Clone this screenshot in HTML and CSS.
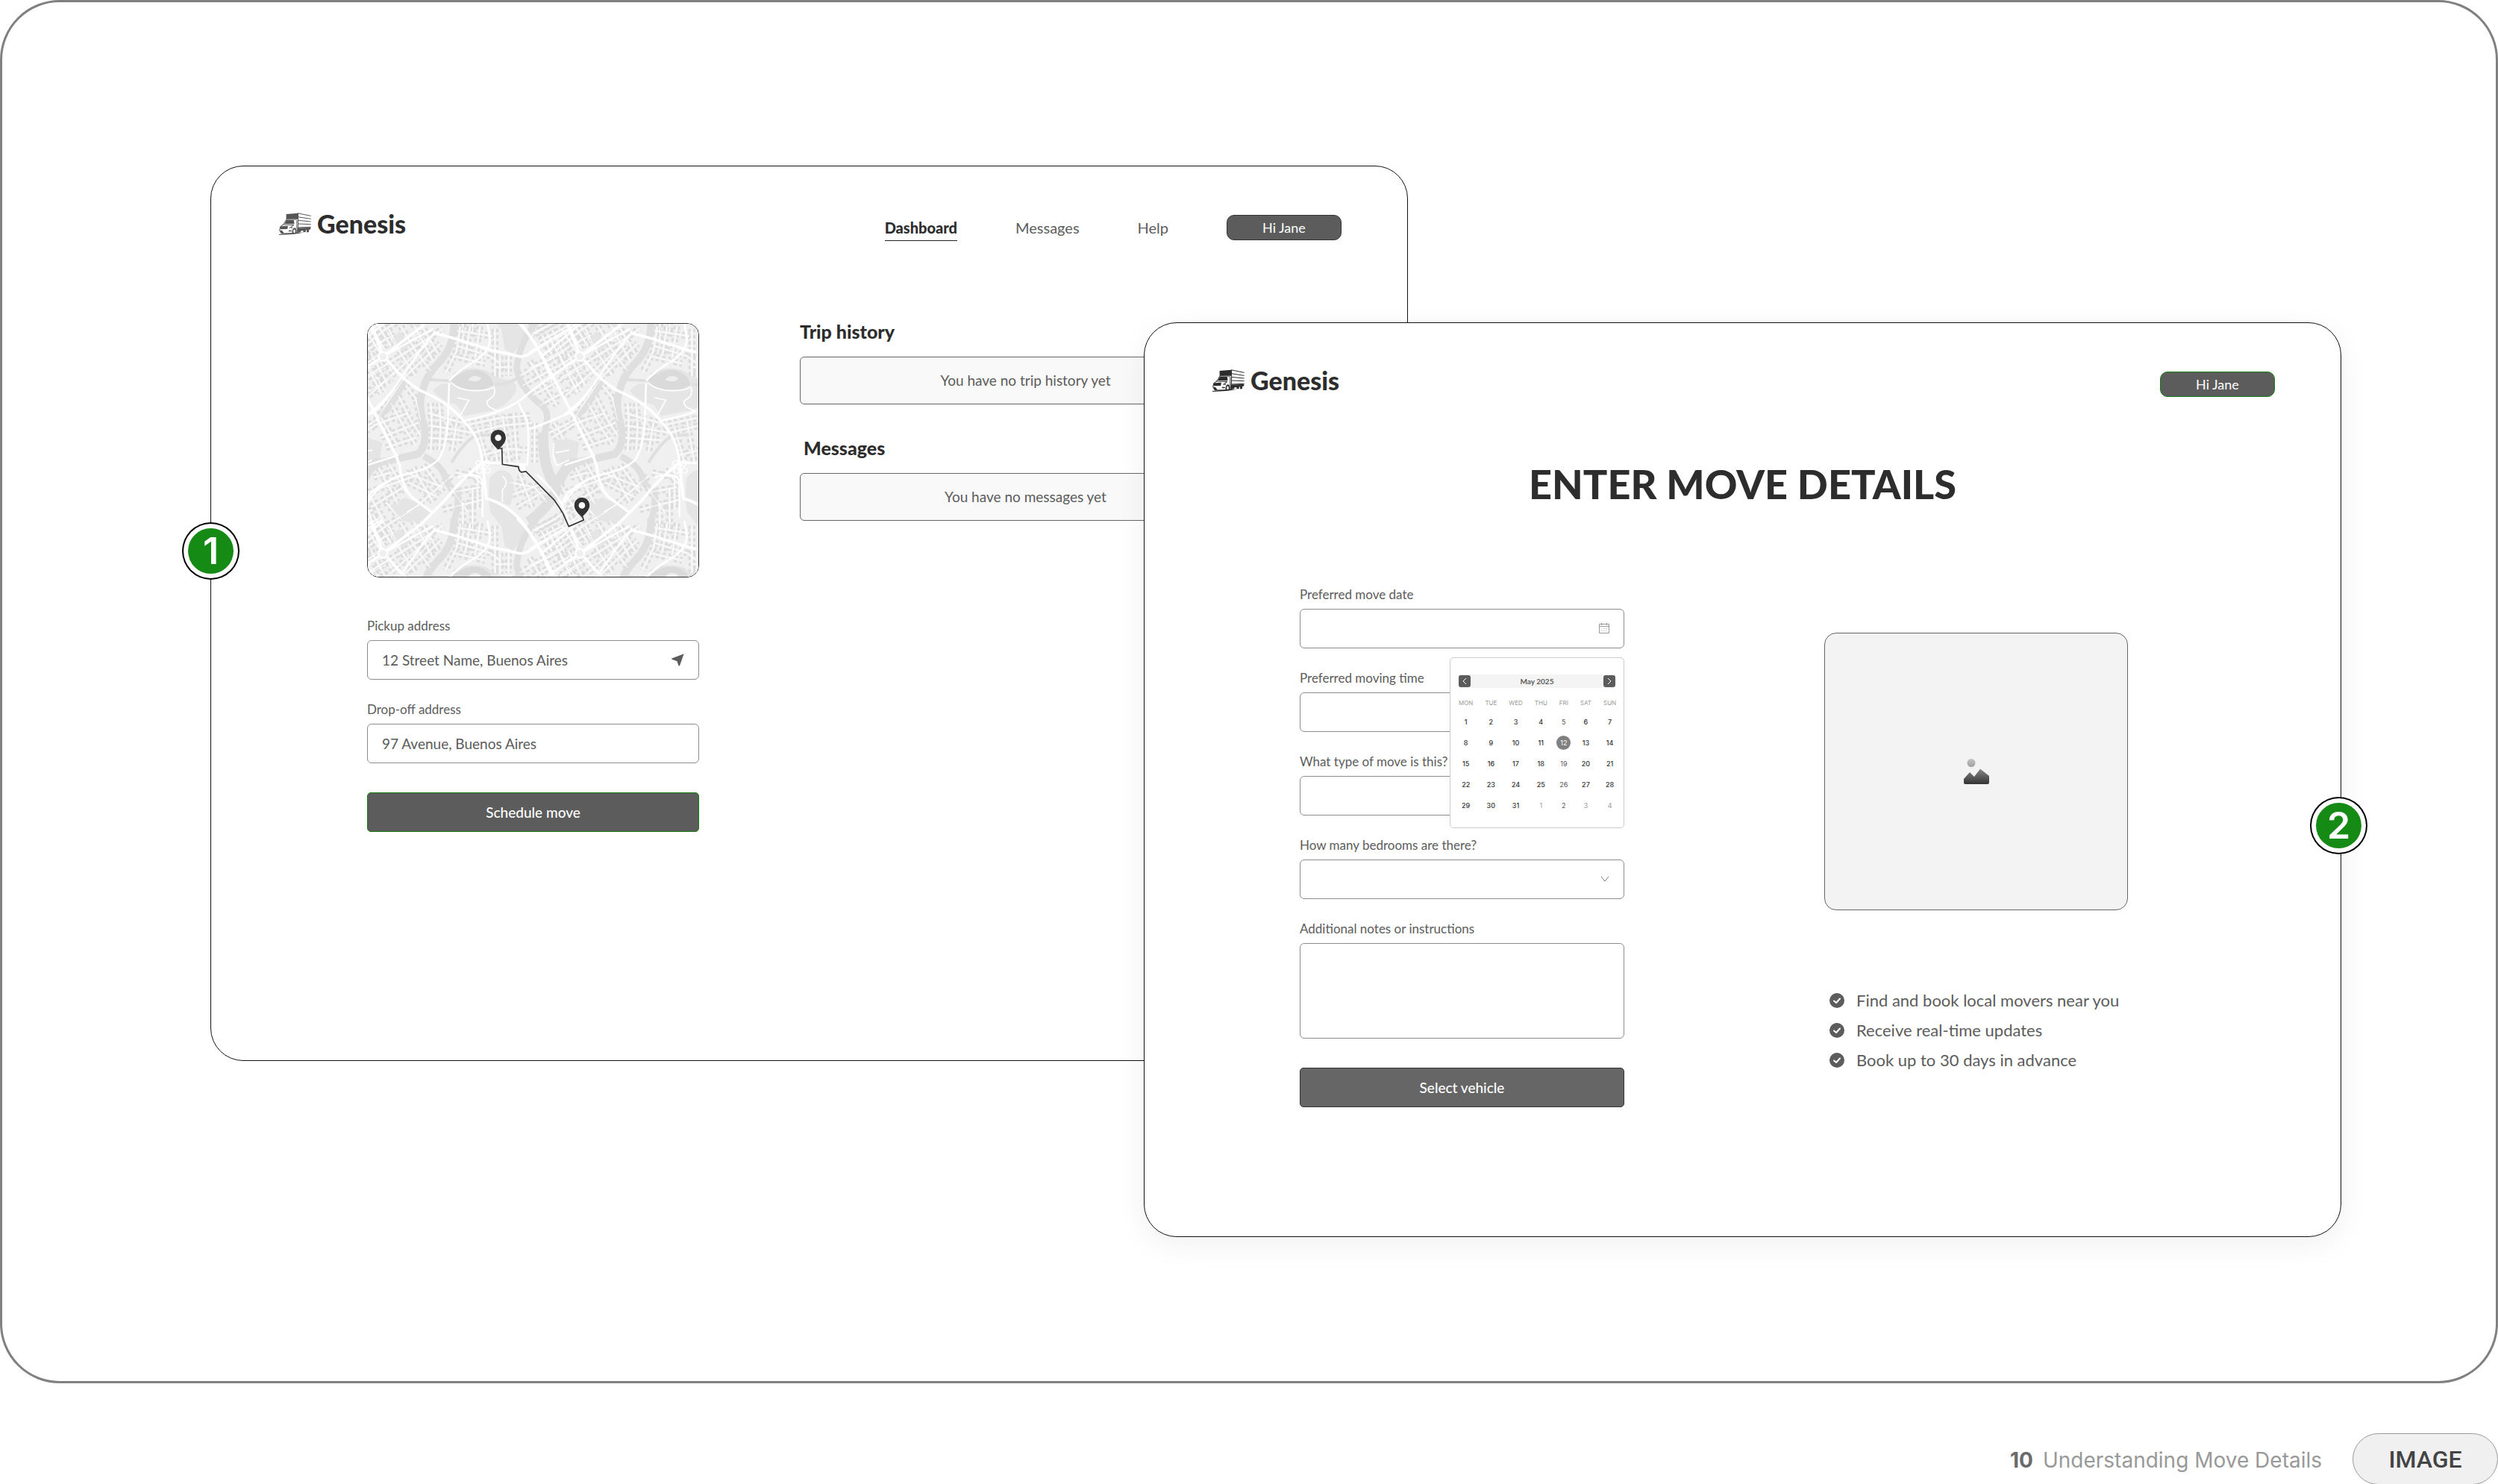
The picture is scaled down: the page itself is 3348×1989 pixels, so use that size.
FILE: index.html
```html
<!DOCTYPE html>
<html lang="en">
<head>
    <meta charset="UTF-8">
    <meta name="viewport" content="width=device-width, initial-scale=1.0">
    <title>Understanding Move Details</title>
    <link rel="stylesheet" href="styles.css">
</head>
<body>
    <!-- Shared symbols -->
    <svg class="symbols" aria-hidden="true">
        <symbol id="truck" viewBox="0 0 130 90">
            <path fill="currentColor" d="M29 6L77 2V27L66 25L32 26L29 28Z"/>
            <path fill="none" stroke="currentColor" stroke-width="3" d="M77 2V62M76 2L129 13M77 17L129 25M77 31L129 36M77 45L129 47M77 60L129 58"/>
            <path fill="none" stroke="currentColor" stroke-width="3" d="M30 27L18 47L5 56L2 72L10 84H56M30 27H68L72 32V64M16 48L60 50L42 62"/>
            <path fill="currentColor" d="M30 30H60L62 46L22 45Z"/>
            <path fill="currentColor" d="M7 55L36 53L34 66L4 67ZM4 71L12 72L20 82L14 85L7 82ZM46 62L54 56L53 64ZM40 71L52 72L50 76L38 76Z"/>
            <path fill="currentColor" d="M53 84Q52 62 63 61Q73 62 72 82L66 85Z"/>
            <ellipse cx="62" cy="75" rx="4" ry="7" fill="#fff"/>
            <path fill="currentColor" d="M73 62L128 60V67L121 69V78L112 80V70L108 71V78L98 79V72L88 74V78L73 82Z"/>
            <path fill="currentColor" d="M0 87Q40 83 100 80Q60 90 0 90Z"/>
        </symbol>
        <symbol id="check" viewBox="0 0 20 20">
            <circle cx="10" cy="10" r="10" fill="#5c5c5c"/>
            <path fill="none" stroke="#fff" stroke-width="2" stroke-linecap="round" stroke-linejoin="round" d="M6 10.500L9 13L14 7.500"/>
        </symbol>
        <symbol id="pin" viewBox="0 0 62 80">
            <path fill="#333" d="M31 0A31 31 0 0 1 62 31C62 52 44 66 31 80C18 66 0 52 0 31A31 31 0 0 1 31 0Z"/>
            <circle cx="31" cy="32" r="13" fill="#fff"/>
        </symbol>
    </svg>

    <main class="board">
        <section class="screen dashboard">
            <span class="badge">1</span>
            <header class="topbar">
                <a class="logo muted" href="#"><svg><use href="#truck"/></svg>Genesis</a>
                <nav>
                    <a class="active" href="#">Dashboard</a>
                    <a href="#">Messages</a>
                    <a href="#">Help</a>
                    <button class="user" type="button">Hi Jane</button>
                </nav>
            </header>

            <div class="columns">
                <form>
                    <svg class="map" viewBox="36 40 1336 1021" preserveAspectRatio="xMidYMid slice" role="img" aria-label="Route map">
                        <defs>
                            <!-- the city repeats every 795 units both ways -->
                            <path id="streets" d="
                                M0 150L110 60L210 0 M20 260L200 150L340 60 M40 330L130 250L290 110 M70 430L190 250L330 120
                                M120 60L170 160L230 250 M170 50L230 150L290 230 M60 20L130 130 M220 40L300 190 M20 180L90 320 M50 160L120 290 M250 40L320 160
                                M410 50L395 150L350 240 M450 50L430 170 M490 50L470 180 M400 130L530 170L570 200 M380 170L510 200 M410 70L540 90
                                M550 60V250 M570 170V255 M605 170V250 M550 215H605
                                M650 250L830 150 M660 290L860 180 M700 330L900 220 M730 370L930 260 M690 190L800 370 M780 120L900 310 M730 110L880 30 M700 80L800 30 M820 60L940 250 M760 80L830 200 M690 220L780 180
                                M190 290L230 340L250 430 M160 330L210 430L250 490 M130 360L190 470L230 530 M90 420L150 520 M60 450L200 400 M90 500L240 440 M110 540L230 500
                                M290 360Q300 450 290 560 M325 360Q335 450 325 550 M280 400L420 440 M285 450L460 480 M280 500L430 510 M395 440L375 560
                                M430 450L570 420L690 410 M460 480L580 450L700 440 M500 570L600 545L680 550 M530 430L560 600 M580 410L610 600 M625 400L640 600 M480 460L520 600 M710 440V600
                                M790 440L830 510 M780 500L860 450 M770 480L870 430
                                M60 660L130 640 M80 620L160 770 M120 600L190 720 M40 720L240 650 M50 780L180 700 M110 760L170 830 M20 690L100 830
                                M190 640L340 700 M200 680L320 740 M220 620L300 760 M260 610L340 720 M230 780L380 650
                                M390 640L480 660V790 M440 630L500 690 M380 720L490 700 M340 790L500 750 M420 760V900 M370 700L440 800 M460 700V870
                                M610 680L710 700L760 760 M620 730L730 690 M640 780L740 720 M650 650L700 780
                                M690 890L850 790 M720 940L890 840 M750 980L940 880 M780 860L830 960 M740 880L800 1000 M830 820L900 940 M870 800L940 920"/>
                            <g id="blocks" fill="none">
                                <use href="#streets" stroke="#dcdcdc" stroke-width="28" stroke-dasharray="14 11"/>
                                <use href="#streets" stroke="#f0f0f0" stroke-width="10"/>
                            </g>
                            <g id="land">
                                <path fill="#e5e5e5" d="M300 310Q330 270 375 285L380 240Q440 205 520 230Q550 262 600 265Q645 275 635 315Q600 370 545 390L425 412L395 365Q340 360 300 310ZM525 745Q620 790 685 870Q650 920 625 955L590 940L577 860L530 800ZM527 665Q570 605 615 650Q640 710 610 775L525 740ZM785 510Q840 495 890 520L880 590L810 612L785 560ZM130 770L190 740L305 800L240 848L165 832ZM130 110L165 70L210 120L180 150Z"/>
                                <path fill="none" stroke="#dfdfdf" stroke-width="30" d="M385 30Q385 130 330 190Q270 250 258 310Q240 360 258 430Q285 520 240 565Q180 580 36 610"/>
                                <path fill="none" stroke="#dfdfdf" stroke-width="26" d="M262 575Q335 610 350 660Q360 700 400 720Q405 780 385 835M185 270Q150 340 110 390L85 410M720 30Q645 120 638 220Q650 300 740 370Q775 400 752 470Q735 600 800 680"/>
                                <path fill="none" stroke="#dfdfdf" stroke-width="42" d="M90 605Q60 590 20 660Q0 760 -110 840M745 480Q740 610 790 690"/>
                                <path fill="none" stroke="#dfdfdf" stroke-width="12" d="M280 265L370 270M550 285Q600 285 640 260M375 600Q430 510 475 490L545 488"/>
                                <path fill="#dadada" d="M370 270Q430 215 490 228Q535 245 545 285Q500 315 470 305Q420 318 370 270Z"/>
                                <path fill="#eee" d="M442 266Q465 238 495 260Q480 282 442 266Z"/>
                            </g>
                            <g id="roads" fill="none" stroke="#fff">
                                <use href="#streets" stroke-width="3"/>
                                <path stroke-width="5" d="M375 280Q410 310 470 310Q520 310 545 295Q560 330 520 350Q510 375 560 390M398 338L445 348L410 410M580 655Q610 680 580 710V760M788 520Q780 590 800 612L850 590M795 560L850 550M195 800L245 770"/>
                                <path stroke-width="8" d="M45 40L98 172L36 210M98 172L300 60M36 405Q100 360 150 290L240 160Q280 100 310 75M430 430Q580 400 650 350Q720 290 895 172M365 280L360 430Q355 540 320 590Q280 630 160 655Q90 680 36 760M365 270Q400 230 470 190Q530 150 530 100L520 40M500 600L680 608Q690 500 680 430L645 360M690 465Q760 440 850 400Q900 360 940 300M690 950L890 830M820 780Q830 700 960 655M740 170L895 40M400 660Q500 630 500 690V820M36 610L160 570M720 650Q800 720 830 790L895 960"/>
                                <path stroke-width="11" d="M115 185Q180 270 250 310Q370 360 430 440Q490 500 500 600L515 745Q600 770 660 840Q730 930 780 1060M300 75L390 100L530 145L650 172Q680 175 720 140M640 30Q700 90 740 170L850 380L940 560L960 610Q970 700 1010 740L1090 800M500 600Q420 660 350 750L250 850L98 967"/>
                                <g stroke-width="5">
                                    <circle cx="485" cy="603" r="11"/>
                                    <circle cx="517" cy="603" r="11"/>
                                    <circle cx="488" cy="633" r="11"/>
                                    <circle cx="520" cy="633" r="11"/>
                                </g>
                                <circle cx="98" cy="172" r="18" fill="#f0f0f0" stroke-width="7"/>
                                <circle cx="660" cy="620" r="14" fill="#fff"/>
                            </g>
                        </defs>
                        <rect x="36" y="40" width="1336" height="1021" fill="#f0f0f0"/>
                        <use href="#blocks" x="-795" y="-795"/><use href="#blocks" y="-795"/><use href="#blocks" x="795" y="-795"/>
                        <use href="#blocks" x="-795"/><use href="#blocks"/><use href="#blocks" x="795"/>
                        <use href="#blocks" x="-795" y="795"/><use href="#blocks" y="795"/><use href="#blocks" x="795" y="795"/>
                        <use href="#land" x="-795" y="-795"/><use href="#land" y="-795"/><use href="#land" x="795" y="-795"/>
                        <use href="#land" x="-795"/><use href="#land"/><use href="#land" x="795"/>
                        <use href="#land" y="795"/><use href="#land" x="795" y="795"/>
                        <use href="#roads" x="-795" y="-795"/><use href="#roads" y="-795"/><use href="#roads" x="795" y="-795"/>
                        <use href="#roads" x="-795"/><use href="#roads"/><use href="#roads" x="795"/>
                        <use href="#roads" x="-795" y="795"/><use href="#roads" y="795"/><use href="#roads" x="795" y="795"/>
                        <path fill="none" stroke="#333" stroke-width="5" d="M563 543H578L580 607L645 617Q646 634 657 639L675 636L790 752Q810 780 825 806L848 858L908 832L901 812"/>
                        <use href="#pin" x="532" y="468" width="62" height="80"/>
                        <use href="#pin" x="870" y="741" width="62" height="80"/>
                    </svg>

                    <div class="field">
                        <label for="pickup">Pickup address</label>
                        <div class="control">
                            <input type="text" id="pickup" value="12 Street Name, Buenos Aires">
                            <svg class="icon-locate" viewBox="0 0 48 48"><path fill="#5c5c5c" d="M1 18L47 1L31 46Q28 48 26 44L21 29L2 22Q-1 20 1 18Z"/></svg>
                        </div>
                    </div>
                    <div class="field">
                        <label for="dropoff">Drop-off address</label>
                        <div class="control">
                            <input type="text" id="dropoff" value="97 Avenue, Buenos Aires">
                        </div>
                    </div>
                    <button class="submit green" type="button">Schedule move</button>
                </form>

                <div class="activity">
                    <h2>Trip history</h2>
                    <p class="empty">You have no trip history yet</p>
                    <h2 class="indent">Messages</h2>
                    <p class="empty">You have no messages yet</p>
                </div>
            </div>
        </section>

        <section class="screen details">
            <span class="badge">2</span>
            <header class="topbar">
                <a class="logo" href="#"><svg><use href="#truck"/></svg>Genesis</a>
                <button class="user green" type="button">Hi Jane</button>
            </header>
            <h1>ENTER MOVE DETAILS</h1>

            <div class="columns">
                <form>
                    <div class="field">
                        <label for="date">Preferred move date</label>
                        <div class="control">
                            <input type="text" id="date">
                            <svg class="icon-calendar" viewBox="0 0 14 16" fill="none" stroke="#999">
                                <path d="M.5 2.500H13.500V14.500H.5ZM.5 5.500H13.500M3.500 1V4M10.500 1V4"/>
                                <path stroke-dasharray="1 2" d="M6.500 8.500H12M3.500 11.500H11"/>
                            </svg>
                            <div class="calendar">
                                <div class="month">
                                    <button type="button" aria-label="Previous month"><svg viewBox="0 0 16 16"><path d="M10 4L6 8L10 12"/></svg></button>
                                    <span>May 2025</span>
                                    <button type="button" aria-label="Next month"><svg viewBox="0 0 16 16"><path d="M6 4L10 8L6 12"/></svg></button>
                                </div>
                                <table>
                                    <thead>
                                        <tr><th>MON</th><th>TUE</th><th>WED</th><th>THU</th><th>FRI</th><th>SAT</th><th>SUN</th></tr>
                                    </thead>
                                    <tbody>
                                        <tr><td>1</td><td>2</td><td>3</td><td>4</td><td>5</td><td>6</td><td>7</td></tr>
                                        <tr><td>8</td><td>9</td><td>10</td><td>11</td><td><span class="selected">12</span></td><td>13</td><td>14</td></tr>
                                        <tr><td>15</td><td>16</td><td>17</td><td>18</td><td>19</td><td>20</td><td>21</td></tr>
                                        <tr><td>22</td><td>23</td><td>24</td><td>25</td><td>26</td><td>27</td><td>28</td></tr>
                                        <tr><td>29</td><td>30</td><td>31</td><td class="next">1</td><td class="next">2</td><td class="next">3</td><td class="next">4</td></tr>
                                    </tbody>
                                </table>
                            </div>
                        </div>
                    </div>
                    <div class="field">
                        <label for="time">Preferred moving time</label>
                        <div class="control">
                            <input type="text" id="time">
                        </div>
                    </div>
                    <div class="field">
                        <label for="type">What type of move is this?</label>
                        <div class="control">
                            <select id="type"><option value=""></option></select>
                        </div>
                    </div>
                    <div class="field">
                        <label for="bedrooms">How many bedrooms are there?</label>
                        <div class="control">
                            <select id="bedrooms"><option value=""></option></select>
                            <svg class="icon-chevron" viewBox="0 0 12 8"><path fill="none" stroke="#777" d="M1 1L6 7L11 1"/></svg>
                        </div>
                    </div>
                    <div class="field">
                        <label for="notes">Additional notes or instructions</label>
                        <div class="control">
                            <textarea id="notes"></textarea>
                        </div>
                    </div>
                    <button class="submit light" type="button">Select vehicle</button>
                </form>

                <aside>
                    <div class="picture">
                        <svg viewBox="0 0 34 34">
                            <defs>
                                <linearGradient id="sun" x2="0" y2="1"><stop stop-color="#c4c4c4"/><stop offset="1" stop-color="#a0a0a0"/></linearGradient>
                                <linearGradient id="hill" x2="0" y2="1"><stop stop-color="#888"/><stop offset="1" stop-color="#333"/></linearGradient>
                            </defs>
                            <circle cx="10" cy="5.500" r="5.500" fill="url(#sun)"/>
                            <path fill="url(#hill)" d="M0 27L8 18L14 24L22 13.500L34 23V32Q34 34 32 34H2Q0 34 0 32Z"/>
                        </svg>
                    </div>
                    <ul class="perks">
                        <li><svg><use href="#check"/></svg>Find and book local movers near you</li>
                        <li><svg><use href="#check"/></svg>Receive real-time updates</li>
                        <li><svg><use href="#check"/></svg>Book up to 30 days in advance</li>
                    </ul>
                </aside>
            </div>
        </section>
    </main>

    <footer class="caption">
        <strong>10</strong>
        <span>Understanding Move Details</span>
        <span class="tag">IMAGE</span>
    </footer>
</body>
</html>
```

FILE: styles.css
```css
* {
    box-sizing: border-box;
}
body {
    margin: 0;
    background: #fff;
    color: #5c5c5c;
    font-family: Lato, "Open Sans", sans-serif;
    font-size: 19px;
}
h1, h2, p, ul {
    margin: 0;
    padding: 0;
}
a {
    color: inherit;
    text-decoration: none;
}
button, input, select, textarea {
    font: inherit;
    color: inherit;
}
.symbols {
    display: none;
}

/* Board with the two overlapping screens */
.board {
    display: grid;
    grid-template-columns: minmax(0, 279fr) minmax(0, 1251fr) minmax(0, 354fr) minmax(0, 1251fr) minmax(0, 207fr);
    align-items: start;
    padding: 219px 0 193px;
    border: 3px solid #808080;
    border-radius: 80px;
}
.screen {
    position: relative;
    grid-row: 1;
    background: #fff;
    border: 1px solid #111;
    border-radius: 44px;
}
.dashboard {
    grid-column: 2 / 4;
    padding-bottom: 306px;
}
.details {
    grid-column: 3 / 5;
    margin-top: 210px;
    padding-bottom: 173px;
    box-shadow: 0 10px 40px rgba(0, 0, 0, 0.06);
}
.badge {
    position: absolute;
    top: 485px;
    left: -31px;
    width: 61px;
    height: 61px;
    border-radius: 50%;
    background: #158b15;
    box-shadow: 0 0 0 6px #fff, 0 0 0 8px #000;
    color: #fff;
    font: 600 50px/61px Inter, sans-serif;
    text-align: center;
}
.details .badge {
    top: 643px;
    left: auto;
    right: -28px;
}

/* Header */
.topbar {
    display: flex;
    justify-content: space-between;
    align-items: center;
    height: 36px;
    padding: 0 88px 0 91px;
    margin-top: 64px;
}
.logo {
    display: flex;
    align-items: center;
    gap: 8px;
    margin-bottom: 10px;
    color: #2d2d2d;
    font-size: 34px;
    font-weight: 900;
    line-height: 26px;
}
.logo svg {
    width: 43px;
    height: 30px;
}
.muted svg {
    color: #555;
}
nav {
    display: flex;
    align-items: center;
    gap: 78px;
    font-size: 20px;
}
nav a {
    padding: 6px 0 5px;
    border-bottom: 1px solid transparent;
    line-height: 24px;
}
nav .active {
    border-bottom-color: #222;
    color: #2d2d2d;
    font-weight: 900;
}
.user {
    width: 154px;
    height: 34px;
    padding: 0;
    border: 1px solid #333;
    border-radius: 10px;
    background: #5c5c5c;
    color: #fff;
    font-size: 18px;
}

/* Content */
.columns {
    display: grid;
    align-items: start;
}
.dashboard .columns {
    grid-template-columns: minmax(0, 445fr) minmax(0, 605fr);
    gap: 135px;
    padding: 0 209px;
    margin-top: 110px;
}
.details .columns {
    grid-template-columns: minmax(0, 435fr) minmax(0, 407fr);
    gap: 268px;
    padding: 0 285px 0 208px;
    margin-top: 106px;
}
h1 {
    margin-top: 84px;
    color: #2d2d2d;
    font-size: 54px;
    font-weight: 900;
    line-height: 64px;
    text-align: center;
}
h2 {
    margin-bottom: 23px;
    color: #2d2d2d;
    font-size: 25px;
    font-weight: 900;
    line-height: 22px;
}
.indent {
    margin-top: 47px;
    padding-left: 5px;
}
.empty {
    border: 1px solid #666;
    border-radius: 6px;
    background: #f9f9f9;
    line-height: 62px;
    text-align: center;
}
.map {
    display: block;
    width: 100%;
    height: 341px;
    margin-bottom: 55px;
    border: 1px solid #333;
    border-radius: 16px;
}

/* Form */
.field {
    margin-bottom: 30px;
}
.field label {
    display: block;
    margin-bottom: 9px;
    font-size: 17px;
    line-height: 20px;
}
.control {
    position: relative;
}
.control input, .control select, .control textarea {
    display: block;
    width: 100%;
    height: 53px;
    padding: 0 19px;
    border: 1px solid #8c8c8c;
    border-radius: 6px;
    background: #fff;
    appearance: none;
    resize: none;
}
.control textarea {
    height: 128px;
}
.control > svg {
    position: absolute;
    top: 18px;
    right: 20px;
}
.icon-locate {
    width: 17px;
    height: 17px;
}
.icon-calendar {
    width: 14px;
    height: 16px;
}
.icon-chevron {
    width: 12px;
    margin-top: 4px;
}
.submit {
    display: block;
    width: 100%;
    height: 53px;
    margin-top: 39px;
    border: 1px solid #333;
    border-radius: 5px;
    background: #5c5c5c;
    color: #fff;
    font-weight: 500;
}
.light {
    background: #666;
}
.green {
    border-color: #127d12;
}

/* Date picker */
.calendar {
    position: absolute;
    z-index: 1;
    top: 65px;
    right: 0;
    width: 234px;
    height: 229px;
    padding: 22px 11px 0;
    border: 1px solid #ccc;
    border-radius: 5px;
    background: #fff;
}
.month {
    display: flex;
    justify-content: space-between;
    align-items: center;
    height: 18px;
    background: #f4f4f4;
    font-size: 10px;
    font-weight: 700;
}
.month button {
    width: 16px;
    height: 16px;
    padding: 0;
    border: 0;
    border-radius: 3px;
    background: #5c5c5c;
}
.month svg {
    display: block;
    fill: none;
    stroke: #fff;
}
.calendar table {
    width: 100%;
    margin-top: 8px;
    border-collapse: collapse;
    font-family: Inter, sans-serif;
    font-size: 9px;
    color: #333;
}
.calendar th, .calendar td {
    height: 28px;
    padding: 0 8px;
    font-weight: 500;
    text-align: center;
}
.calendar th {
    height: 23px;
    color: #999;
    font-size: 8px;
    font-weight: 400;
}
.calendar th:first-child, .calendar td:first-child {
    padding-left: 0;
}
.calendar th:last-child, .calendar td:last-child {
    padding-right: 0;
}
.calendar td:nth-child(5) {
    color: #555;
    font-weight: 400;
}
.calendar .next {
    color: #999;
    font-weight: 400;
}
.selected {
    display: inline-block;
    width: 19px;
    margin: 0 -4px;
    border-radius: 50%;
    background: #808080;
    color: #fff;
    line-height: 19px;
}

/* Right side of the details screen */
aside {
    margin-top: 61px;
}
.picture {
    display: grid;
    place-items: center;
    height: 372px;
    border: 1px solid #666;
    border-radius: 16px;
    background: #f3f3f3;
}
.picture svg {
    width: 34px;
    height: 34px;
}
.perks {
    display: grid;
    gap: 16px;
    margin-top: 109px;
    padding-left: 7px;
    font-size: 22px;
    line-height: 24px;
    list-style: none;
    white-space: nowrap;
}
.perks li {
    display: flex;
    align-items: center;
    gap: 16px;
}
.perks svg {
    width: 20px;
    height: 20px;
}

/* Caption */
.caption {
    display: flex;
    justify-content: flex-end;
    align-items: baseline;
    gap: 13px;
    margin-top: 67px;
    color: #999;
    font-family: Inter, sans-serif;
    font-size: 28px;
}
.caption strong {
    color: #6b6b6b;
}
.tag {
    width: 195px;
    height: 69px;
    margin-left: 28px;
    border: 1px solid #999;
    border-radius: 35px;
    background: #f0f0f0;
    color: #444;
    font: 500 32px/69px Roboto, sans-serif;
    text-align: center;
}
```
